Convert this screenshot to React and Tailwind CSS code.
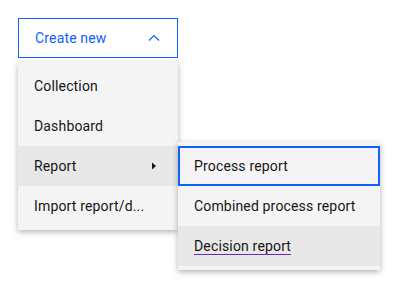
import React from 'react';

const font = { fontFamily: 'Roboto, "Noto Sans", sans-serif' };

const MenuItem = ({ label, active, children }) => (
  <div
    className={`relative h-10 flex items-center justify-between px-4 text-sm tracking-[0.16px] text-[#161616] ${
      active ? 'bg-[#e8e8e8]' : ''
    }`}
  >
    <span className="truncate">{label}</span>
    {children}
  </div>
);

const App = () => {
  return (
    <div className="min-h-screen bg-white pt-[18px] pl-[18px]" style={font}>
      <div className="w-[160px]">
        <button className="w-full h-10 border border-[#0f62fe] flex items-center justify-between px-4 text-sm tracking-[0.16px] text-[#0f62fe] bg-white">
          <span>Create new</span>
          <svg width="16" height="16" viewBox="0 0 16 16" className="mr-[-1px]">
            <path d="M3 10.5 L8 5.5 L13 10.5" fill="none" stroke="#0f62fe" strokeWidth="1.2" />
          </svg>
        </button>

        <div className="mt-1 bg-[#f4f4f4] py-1 shadow-[0_2px_6px_rgba(0,0,0,0.3)]">
          <MenuItem label="Collection" />
          <MenuItem label="Dashboard" />
          <MenuItem label="Report" active>
            <svg width="8" height="8" viewBox="0 0 8 8" className="mr-1">
              <path d="M2 0.5 L6 4 L2 7.5 Z" fill="#161616" />
            </svg>
            <div className="absolute left-full top-[-4px] w-[202px] bg-[#f4f4f4] py-1 shadow-[0_2px_6px_rgba(0,0,0,0.3)]">
              <div className="h-10 flex items-center px-4 text-sm text-[#161616] border-2 border-[#0f62fe] pl-[14px]">
                Process report
              </div>
              <div className="h-10 flex items-center px-4 text-sm text-[#161616]">
                Combined process report
              </div>
              <div className="h-10 flex items-center px-4 text-sm text-[#161616] bg-[#e8e8e8]">
                <span className="underline decoration-[#6929c4] underline-offset-[3px]">Decision report</span>
              </div>
            </div>
          </MenuItem>
          <MenuItem label="Import report/d..." />
        </div>
      </div>
    </div>
  );
};

export default App;
